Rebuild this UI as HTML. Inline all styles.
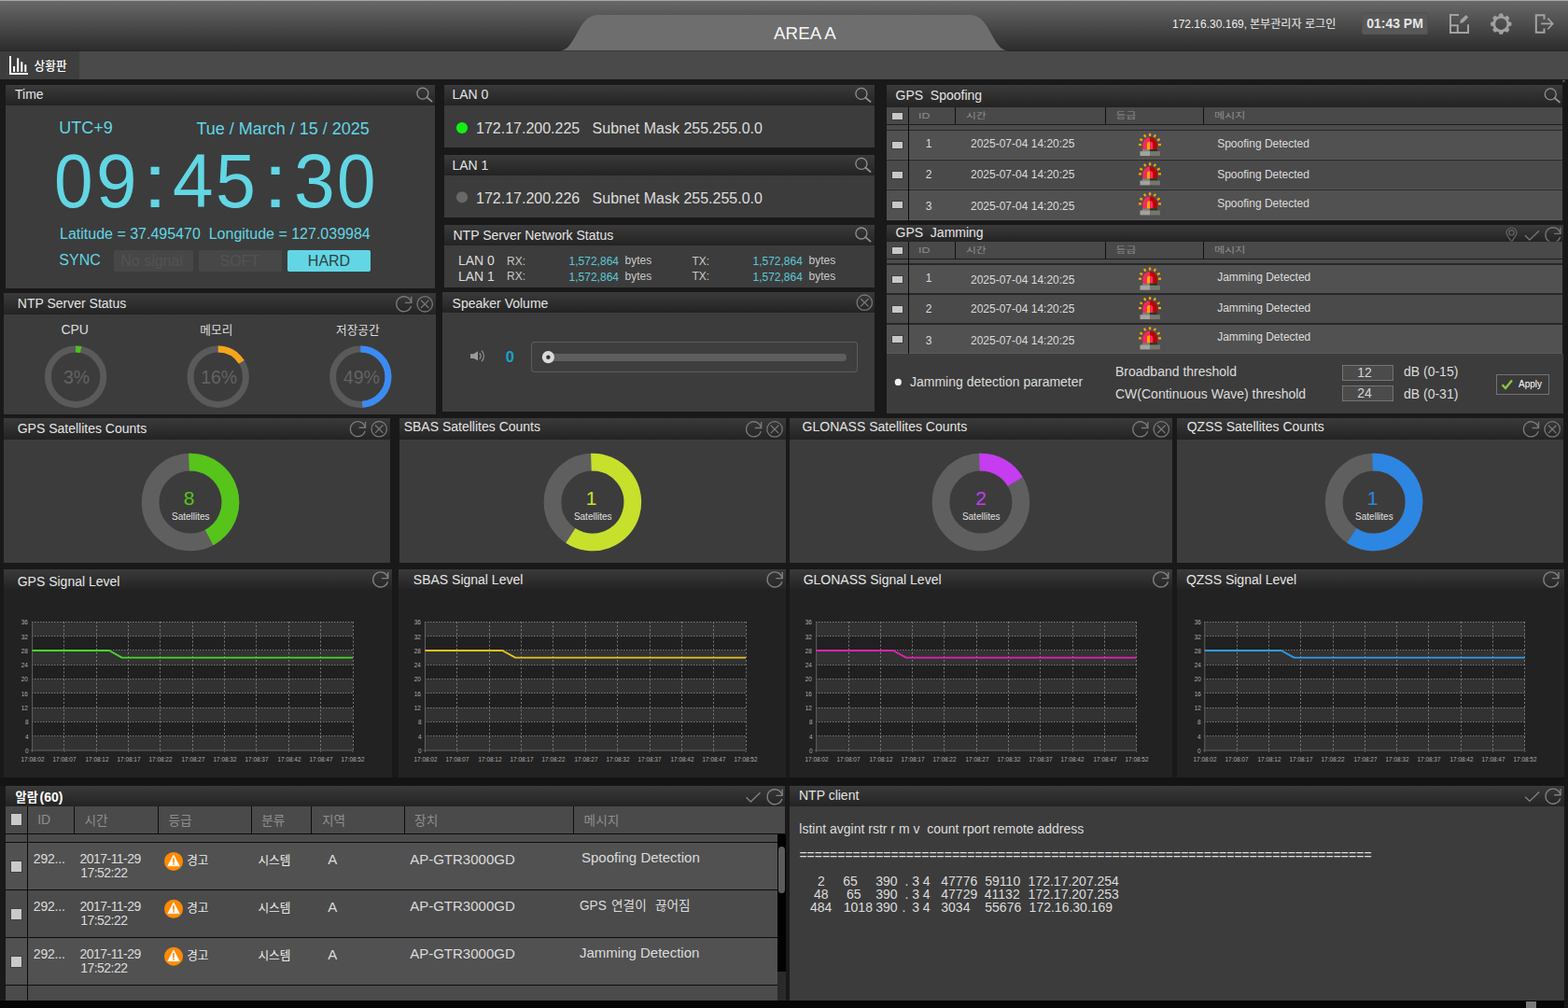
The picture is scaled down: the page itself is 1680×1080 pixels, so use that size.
<!DOCTYPE html>
<html lang="ko"><head><meta charset="utf-8"><title>AREA A</title>
<style>
html,body{margin:0;padding:0}
body{width:1680px;height:1080px;overflow:hidden;position:relative;background:#191919;font-family:"Liberation Sans",sans-serif;color:#ddd}
.a{position:absolute}
.t{position:absolute;white-space:pre;line-height:1}
svg.ov{position:absolute;left:0;top:0}
svg.ov text{font-family:"Liberation Sans","Noto Sans CJK KR",sans-serif;white-space:pre}
</style></head><body>
<div class="a" style="left:0px;top:0px;width:1680px;height:55px;background:linear-gradient(#686868,#2b2b2b);border-top:1px solid #a6a6a6;box-sizing:border-box;"></div>
<div class="a" style="left:0px;top:54px;width:1680px;height:1px;background:#262626;"></div>
<div class="a" style="left:1458.7px;top:13px;width:71.6px;height:24px;background:#585858;border-radius:3px;box-shadow:inset 0 0 0 1px #525252;"></div>
<div class="a" style="left:0px;top:55px;width:1680px;height:30px;background:#4a4a4a;"></div>
<div class="a" style="left:0px;top:55px;width:85px;height:30px;background:#3e3e3e;"></div>
<div class="a" style="left:1675.5px;top:85px;width:4.5px;height:995px;background:#171717;"></div>
<div class="a" style="left:6px;top:91px;width:460px;height:22px;background:linear-gradient(#3a3a3a,#232323);"></div>
<div class="a" style="left:6px;top:113px;width:460px;height:196px;background:#3c3c3c;"></div>
<div class="a" style="left:122.3px;top:268px;width:84.7px;height:23px;background:#474747;border-radius:2px;"></div>
<div class="a" style="left:213px;top:268px;width:89px;height:23px;background:#474747;border-radius:2px;"></div>
<div class="a" style="left:308px;top:268px;width:89px;height:23px;background:#62d6e4;border-radius:2px;"></div>
<div class="a" style="left:476px;top:91px;width:460.5px;height:22px;background:linear-gradient(#3a3a3a,#232323);"></div>
<div class="a" style="left:476px;top:113px;width:460.5px;height:45px;background:#3c3c3c;"></div>
<div class="a" style="left:476px;top:166px;width:460.5px;height:22px;background:linear-gradient(#3a3a3a,#232323);"></div>
<div class="a" style="left:476px;top:188px;width:460.5px;height:45px;background:#3c3c3c;"></div>
<div class="a" style="left:476px;top:241px;width:460.5px;height:22px;background:linear-gradient(#3a3a3a,#232323);"></div>
<div class="a" style="left:476px;top:263px;width:460.5px;height:45px;background:#3c3c3c;"></div>
<div class="a" style="left:950px;top:91px;width:724px;height:24px;background:linear-gradient(#3a3a3a,#232323);"></div>
<div class="a" style="left:950px;top:115px;width:723.5px;height:18.4px;background:#494949;"></div>
<div class="a" style="left:950px;top:133.4px;width:723.5px;height:6px;background:#4b4b4b;"></div>
<div class="a" style="left:950px;top:133.2px;width:723.5px;height:1.1px;background:#1e1e1e;"></div>
<div class="a" style="left:1023px;top:115px;width:1px;height:18.4px;background:#101010;"></div>
<div class="a" style="left:1184px;top:115px;width:1px;height:18.4px;background:#101010;"></div>
<div class="a" style="left:1289px;top:115px;width:1px;height:18.4px;background:#101010;"></div>
<div class="a" style="left:955.8px;top:121px;width:11.6px;height:7px;background:#c8c8c8;box-shadow:0 0 0 1px #3e3e3e;"></div>
<div class="a" style="left:950px;top:138.7px;width:723.5px;height:1.5px;background:#282828;"></div>
<div class="a" style="left:950px;top:140.2px;width:723.5px;height:30.8px;background:#515151;"></div>
<div class="a" style="left:950px;top:170.2px;width:723.5px;height:0.8px;background:#5a5a5a;"></div>
<div class="a" style="left:955.8px;top:152.1px;width:11.6px;height:7px;background:#c8c8c8;box-shadow:0 0 0 1px #3e3e3e;"></div>
<div class="a" style="left:950px;top:170.7px;width:723.5px;height:1.5px;background:#282828;"></div>
<div class="a" style="left:950px;top:172.2px;width:723.5px;height:30.8px;background:#4a4a4a;"></div>
<div class="a" style="left:950px;top:202.2px;width:723.5px;height:0.8px;background:#545454;"></div>
<div class="a" style="left:955.8px;top:184.1px;width:11.6px;height:7px;background:#c8c8c8;box-shadow:0 0 0 1px #3e3e3e;"></div>
<div class="a" style="left:950px;top:202.7px;width:723.5px;height:1.5px;background:#282828;"></div>
<div class="a" style="left:950px;top:204.2px;width:723.5px;height:31.5px;background:#515151;"></div>
<div class="a" style="left:950px;top:234.9px;width:723.5px;height:0.8px;background:#5a5a5a;"></div>
<div class="a" style="left:955.8px;top:216.45px;width:11.6px;height:7px;background:#c8c8c8;box-shadow:0 0 0 1px #3e3e3e;"></div>
<div class="a" style="left:973px;top:115px;width:1px;height:120.7px;background:#0a0a0a;"></div>
<div class="a" style="left:950px;top:240.6px;width:725.2px;height:18px;background:linear-gradient(#3a3a3a,#232323);"></div>
<div class="a" style="left:950px;top:258.6px;width:723.5px;height:18.4px;background:#494949;"></div>
<div class="a" style="left:950px;top:277px;width:723.5px;height:6px;background:#4b4b4b;"></div>
<div class="a" style="left:950px;top:276.8px;width:723.5px;height:1.1px;background:#1e1e1e;"></div>
<div class="a" style="left:1023px;top:258.6px;width:1px;height:18.4px;background:#101010;"></div>
<div class="a" style="left:1184px;top:258.6px;width:1px;height:18.4px;background:#101010;"></div>
<div class="a" style="left:1289px;top:258.6px;width:1px;height:18.4px;background:#101010;"></div>
<div class="a" style="left:955.8px;top:264.6px;width:11.6px;height:7px;background:#c8c8c8;box-shadow:0 0 0 1px #3e3e3e;"></div>
<div class="a" style="left:950px;top:282.4px;width:723.5px;height:1.5px;background:#282828;"></div>
<div class="a" style="left:950px;top:283.9px;width:723.5px;height:30.5px;background:#515151;"></div>
<div class="a" style="left:950px;top:313.6px;width:723.5px;height:0.8px;background:#5a5a5a;"></div>
<div class="a" style="left:955.8px;top:295.65px;width:11.6px;height:7px;background:#c8c8c8;box-shadow:0 0 0 1px #3e3e3e;"></div>
<div class="a" style="left:950px;top:314.3px;width:723.5px;height:1.5px;background:#282828;"></div>
<div class="a" style="left:950px;top:315.8px;width:723.5px;height:30.6px;background:#4a4a4a;"></div>
<div class="a" style="left:950px;top:345.6px;width:723.5px;height:0.8px;background:#545454;"></div>
<div class="a" style="left:955.8px;top:327.6px;width:11.6px;height:7px;background:#c8c8c8;box-shadow:0 0 0 1px #3e3e3e;"></div>
<div class="a" style="left:950px;top:346.3px;width:723.5px;height:1.5px;background:#282828;"></div>
<div class="a" style="left:950px;top:347.8px;width:723.5px;height:30.8px;background:#515151;"></div>
<div class="a" style="left:950px;top:377.8px;width:723.5px;height:0.8px;background:#5a5a5a;"></div>
<div class="a" style="left:955.8px;top:359.7px;width:11.6px;height:7px;background:#c8c8c8;box-shadow:0 0 0 1px #3e3e3e;"></div>
<div class="a" style="left:973px;top:258.6px;width:1px;height:120px;background:#0a0a0a;"></div>
<div class="a" style="left:950px;top:378.6px;width:725.2px;height:64.4px;background:#3c3c3c;"></div>
<div class="a" style="left:1438.3px;top:391px;width:54.7px;height:16.7px;background:#4b4b4b;box-shadow:inset 0 0 0 1px #747474;"></div>
<div class="a" style="left:1438.3px;top:413.3px;width:54.7px;height:16.4px;background:#4b4b4b;box-shadow:inset 0 0 0 1px #747474;"></div>
<div class="a" style="left:1603px;top:401.3px;width:57px;height:21.4px;background:#3a3a3a;box-shadow:inset 0 0 0 1px #727272;"></div>
<div class="a" style="left:4.3px;top:314px;width:462.7px;height:22.5px;background:linear-gradient(#3a3a3a,#232323);"></div>
<div class="a" style="left:4.3px;top:336.5px;width:462.7px;height:107.5px;background:#3c3c3c;"></div>
<div class="a" style="left:473.7px;top:313px;width:463.7px;height:22px;background:linear-gradient(#3a3a3a,#232323);"></div>
<div class="a" style="left:473.7px;top:335px;width:463.7px;height:106.3px;background:#3c3c3c;"></div>
<div class="a" style="left:569.4px;top:366.2px;width:349.4px;height:32.4px;background:#3e3e3e;box-shadow:inset 0 0 0 1px #5c5c5c;border-radius:4px;"></div>
<div class="a" style="left:582.5px;top:378.8px;width:324.5px;height:8.4px;background:#5e5e5e;border-radius:4.2px;"></div>
<div class="a" style="left:3.6px;top:448px;width:414.4px;height:22.6px;background:linear-gradient(#3a3a3a,#232323);"></div>
<div class="a" style="left:3.6px;top:470.6px;width:414.4px;height:132.4px;background:#3c3c3c;"></div>
<div class="a" style="left:427.5px;top:448px;width:414.5px;height:22.6px;background:linear-gradient(#3a3a3a,#232323);"></div>
<div class="a" style="left:427.5px;top:470.6px;width:414.5px;height:132.4px;background:#3c3c3c;"></div>
<div class="a" style="left:846.1px;top:448px;width:409.6px;height:22.6px;background:linear-gradient(#3a3a3a,#232323);"></div>
<div class="a" style="left:846.1px;top:470.6px;width:409.6px;height:132.4px;background:#3c3c3c;"></div>
<div class="a" style="left:1260.5px;top:448px;width:414.3px;height:22.6px;background:linear-gradient(#3a3a3a,#232323);"></div>
<div class="a" style="left:1260.5px;top:470.6px;width:414.3px;height:132.4px;background:#3c3c3c;"></div>
<div class="a" style="left:4.4px;top:609.5px;width:415.4px;height:21.5px;background:linear-gradient(#3a3a3a,#242424);"></div>
<div class="a" style="left:4.4px;top:631px;width:415.4px;height:202.4px;background:#222;"></div>
<div class="a" style="left:427px;top:609.5px;width:414.5px;height:21.5px;background:linear-gradient(#3a3a3a,#242424);"></div>
<div class="a" style="left:427px;top:631px;width:414.5px;height:202.4px;background:#222;"></div>
<div class="a" style="left:845.6px;top:609.5px;width:410.1px;height:21.5px;background:linear-gradient(#3a3a3a,#242424);"></div>
<div class="a" style="left:845.6px;top:631px;width:410.1px;height:202.4px;background:#222;"></div>
<div class="a" style="left:1260.5px;top:609.5px;width:415.5px;height:21.5px;background:linear-gradient(#3a3a3a,#242424);"></div>
<div class="a" style="left:1260.5px;top:631px;width:415.5px;height:202.4px;background:#222;"></div>
<div class="a" style="left:0px;top:833.4px;width:1675.5px;height:8.6px;background:#141414;"></div>
<div class="a" style="left:5.6px;top:842px;width:835.9px;height:21.7px;background:linear-gradient(#3a3a3a,#232323);"></div>
<div class="a" style="left:5.6px;top:863.7px;width:835.9px;height:29.3px;background:#4a4a4a;"></div>
<div class="a" style="left:5.6px;top:893px;width:835.9px;height:1px;background:#0c0c0c;"></div>
<div class="a" style="left:5.6px;top:894px;width:827.4px;height:8px;background:#4b4b4b;"></div>
<div class="a" style="left:833px;top:894px;width:8.5px;height:146.6px;background:#020202;"></div>
<div class="a" style="left:833px;top:1040.6px;width:8.5px;height:31.4px;background:#2a2a2a;"></div>
<div class="a" style="left:833.6px;top:906.8px;width:7px;height:49.8px;background:#5c5c5c;border-radius:3.5px;"></div>
<div class="a" style="left:79px;top:863.7px;width:1px;height:29.3px;background:#0c0c0c;"></div>
<div class="a" style="left:169px;top:863.7px;width:1px;height:29.3px;background:#0c0c0c;"></div>
<div class="a" style="left:269px;top:863.7px;width:1px;height:29.3px;background:#0c0c0c;"></div>
<div class="a" style="left:333px;top:863.7px;width:1px;height:29.3px;background:#0c0c0c;"></div>
<div class="a" style="left:433px;top:863.7px;width:1px;height:29.3px;background:#0c0c0c;"></div>
<div class="a" style="left:614px;top:863.7px;width:1px;height:29.3px;background:#0c0c0c;"></div>
<div class="a" style="left:11.8px;top:872.2px;width:11.7px;height:12px;background:#cacaca;box-shadow:0 0 0 1px #424242;"></div>
<div class="a" style="left:5.6px;top:902px;width:827.4px;height:1px;background:#0c0c0c;"></div>
<div class="a" style="left:5.6px;top:903px;width:827.4px;height:50px;background:#515151;"></div>
<div class="a" style="left:11.8px;top:922.7px;width:11.7px;height:11.6px;background:#cacaca;box-shadow:0 0 0 1px #424242;"></div>
<div class="a" style="left:5.6px;top:953px;width:827.4px;height:1px;background:#0c0c0c;"></div>
<div class="a" style="left:5.6px;top:954px;width:827.4px;height:50px;background:#4b4b4b;"></div>
<div class="a" style="left:11.8px;top:973.65px;width:11.7px;height:11.6px;background:#cacaca;box-shadow:0 0 0 1px #424242;"></div>
<div class="a" style="left:5.6px;top:1004px;width:827.4px;height:1px;background:#0c0c0c;"></div>
<div class="a" style="left:5.6px;top:1005px;width:827.4px;height:50px;background:#515151;"></div>
<div class="a" style="left:11.8px;top:1024.6px;width:11.7px;height:11.6px;background:#cacaca;box-shadow:0 0 0 1px #424242;"></div>
<div class="a" style="left:5.6px;top:1055px;width:827.4px;height:1px;background:#0c0c0c;"></div>
<div class="a" style="left:5.6px;top:1056px;width:827.4px;height:16px;background:#4b4b4b;"></div>
<div class="a" style="left:29px;top:863.7px;width:1px;height:208.3px;background:#0a0a0a;"></div>
<div class="a" style="left:0px;top:1072px;width:1675.5px;height:8px;background:#060606;"></div>
<div class="a" style="left:1635px;top:1073px;width:10.7px;height:7px;background:#7a7a7a;"></div>
<div class="a" style="left:846.1px;top:842px;width:829.7px;height:21.7px;background:linear-gradient(#3a3a3a,#232323);"></div>
<div class="a" style="left:846.1px;top:863.7px;width:829.7px;height:208.8px;background:#3c3c3c;"></div>
<svg class="ov" width="1680" height="1080" viewBox="0 0 1680 1080">
<path d="M600 54.2C617 54.2 619 16 640 16H1040C1061 16 1063 54.2 1080 54.2Z" fill="#6e6e6e"/>
<text x="1338.9" y="30" font-size="12.11" fill="#ececec">본부관리자 로그인</text>
<g fill="none" stroke="#a2a2a2" stroke-width="2"><path d="M1563 16H1554V35H1573V26.3"/><path d="M1554 27.3H1561.8V35"/></g><path d="M1564.2 24.9L1564.9 21.6L1570.7 15.9L1573.2 18.4L1567.5 24.2Z" fill="#a2a2a2"/>
<g fill="#a2a2a2" stroke="#a2a2a2" stroke-width="0.5" stroke-linejoin="round"><path d="M1605.8 17.5L1606.8 14.8H1609.8L1610.8 17.5Z" transform="rotate(0 1608.3 25.7)"/><path d="M1605.8 17.5L1606.8 14.8H1609.8L1610.8 17.5Z" transform="rotate(45 1608.3 25.7)"/><path d="M1605.8 17.5L1606.8 14.8H1609.8L1610.8 17.5Z" transform="rotate(90 1608.3 25.7)"/><path d="M1605.8 17.5L1606.8 14.8H1609.8L1610.8 17.5Z" transform="rotate(135 1608.3 25.7)"/><path d="M1605.8 17.5L1606.8 14.8H1609.8L1610.8 17.5Z" transform="rotate(180 1608.3 25.7)"/><path d="M1605.8 17.5L1606.8 14.8H1609.8L1610.8 17.5Z" transform="rotate(225 1608.3 25.7)"/><path d="M1605.8 17.5L1606.8 14.8H1609.8L1610.8 17.5Z" transform="rotate(270 1608.3 25.7)"/><path d="M1605.8 17.5L1606.8 14.8H1609.8L1610.8 17.5Z" transform="rotate(315 1608.3 25.7)"/></g><circle cx="1608.3" cy="25.7" r="7.5" fill="none" stroke="#a2a2a2" stroke-width="2.5"/>
<g fill="none" stroke="#a2a2a2"><path d="M1654.5 20.8V16.2H1645.8V34.8H1654.5V30.4" stroke-width="2"/><path d="M1651.2 25.4H1663.4M1658.3 19.6L1663.8 25.4L1658.3 31.2" stroke-width="1.6"/></g>
<path d="M11 60V79H30" fill="none" stroke="#fff" stroke-width="2"/><path d="M15.1 71V77M19.2 62.2V77M23.3 66.2V77M27.3 69.2V77" stroke="#fff" stroke-width="2" fill="none"/>
<text x="36.6" y="75.2" font-size="12.7" font-weight="500" fill="#fff">상황판</text>
<path d="M1673.5 87.5L1675.5 85.3L1677.5 87.5Z" fill="#666"/>
<g fill="none" stroke="#909090" stroke-linecap="round"><circle cx="452.9" cy="100.1" r="6" stroke-width="1.3"/><path d="M457.2 104.2L462.6 108.7" stroke-width="1.7"/></g>
<g fill="none" stroke="#909090" stroke-linecap="round"><circle cx="922.9" cy="100.4" r="6" stroke-width="1.3"/><path d="M927.2 104.5L932.6 109" stroke-width="1.7"/></g>
<circle cx="495" cy="137" r="6.1" fill="#12f012"/>
<g fill="none" stroke="#909090" stroke-linecap="round"><circle cx="922.9" cy="175.4" r="6" stroke-width="1.3"/><path d="M927.2 179.5L932.6 184" stroke-width="1.7"/></g>
<circle cx="495" cy="211.3" r="6.1" fill="#686868"/>
<g fill="none" stroke="#909090" stroke-linecap="round"><circle cx="922.9" cy="250" r="6" stroke-width="1.3"/><path d="M927.2 254.1L932.6 258.6" stroke-width="1.7"/></g>
<g fill="none" stroke="#909090" stroke-linecap="round"><circle cx="1661.3" cy="100.9" r="6" stroke-width="1.3"/><path d="M1665.6 105L1671 109.5" stroke-width="1.7"/></g>
<text transform="translate(1034.9 127.4) scale(1.35 1)" font-size="8.79" fill="#8e8e8e">시간</text>
<text transform="translate(1195.6 127.4) scale(1.35 1)" font-size="8.79" fill="#8e8e8e">등급</text>
<text transform="translate(1300.9 127.4) scale(1.38 1)" font-size="8.79" fill="#8e8e8e">메시지</text>
<g transform="translate(1210 138)"><g fill="#ffa500"><rect x="20.9" y="4.9" width="2.3" height="3"/><rect x="-1.1" y="-1.5" width="2.2" height="3" transform="translate(16.7 7.6) rotate(-32)"/><rect x="-1.1" y="-1.5" width="2.2" height="3" transform="translate(27.3 7.6) rotate(32)"/><rect x="-1.1" y="-1.5" width="2.2" height="3" transform="translate(12.7 11.8) rotate(-60)"/><rect x="-1.1" y="-1.5" width="2.2" height="3" transform="translate(31.3 11.8) rotate(60)"/><rect x="10" y="15.9" width="3" height="2.2"/><rect x="31" y="15.9" width="3" height="2.2"/></g><path d="M14.3 22V17A7.75 7.75 0 0 1 22.05 9.2V22Z" fill="#f2295c"/><path d="M29.8 22V17A7.75 7.75 0 0 0 22.05 9.2V22Z" fill="#c00000"/><path d="M18.9 22V17A3.15 3.15 0 0 1 22.05 13.85V22Z" fill="#ffa500"/><path d="M25.2 22V17A3.15 3.15 0 0 0 22.05 13.85V22Z" fill="#f2305f"/><rect x="14" y="22" width="8.05" height="2.2" fill="#7c827a"/><rect x="22.05" y="22" width="7.9" height="2.2" fill="#1f3d20"/><rect x="11.5" y="24.1" width="10.55" height="4.9" fill="#a3a39d"/><rect x="22.05" y="24.1" width="10.85" height="4.9" fill="#76786f"/></g>
<g transform="translate(1210 169.4)"><g fill="#ffa500"><rect x="20.9" y="4.9" width="2.3" height="3"/><rect x="-1.1" y="-1.5" width="2.2" height="3" transform="translate(16.7 7.6) rotate(-32)"/><rect x="-1.1" y="-1.5" width="2.2" height="3" transform="translate(27.3 7.6) rotate(32)"/><rect x="-1.1" y="-1.5" width="2.2" height="3" transform="translate(12.7 11.8) rotate(-60)"/><rect x="-1.1" y="-1.5" width="2.2" height="3" transform="translate(31.3 11.8) rotate(60)"/><rect x="10" y="15.9" width="3" height="2.2"/><rect x="31" y="15.9" width="3" height="2.2"/></g><path d="M14.3 22V17A7.75 7.75 0 0 1 22.05 9.2V22Z" fill="#f2295c"/><path d="M29.8 22V17A7.75 7.75 0 0 0 22.05 9.2V22Z" fill="#c00000"/><path d="M18.9 22V17A3.15 3.15 0 0 1 22.05 13.85V22Z" fill="#ffa500"/><path d="M25.2 22V17A3.15 3.15 0 0 0 22.05 13.85V22Z" fill="#f2305f"/><rect x="14" y="22" width="8.05" height="2.2" fill="#7c827a"/><rect x="22.05" y="22" width="7.9" height="2.2" fill="#1f3d20"/><rect x="11.5" y="24.1" width="10.55" height="4.9" fill="#a3a39d"/><rect x="22.05" y="24.1" width="10.85" height="4.9" fill="#76786f"/></g>
<g transform="translate(1210 201.4)"><g fill="#ffa500"><rect x="20.9" y="4.9" width="2.3" height="3"/><rect x="-1.1" y="-1.5" width="2.2" height="3" transform="translate(16.7 7.6) rotate(-32)"/><rect x="-1.1" y="-1.5" width="2.2" height="3" transform="translate(27.3 7.6) rotate(32)"/><rect x="-1.1" y="-1.5" width="2.2" height="3" transform="translate(12.7 11.8) rotate(-60)"/><rect x="-1.1" y="-1.5" width="2.2" height="3" transform="translate(31.3 11.8) rotate(60)"/><rect x="10" y="15.9" width="3" height="2.2"/><rect x="31" y="15.9" width="3" height="2.2"/></g><path d="M14.3 22V17A7.75 7.75 0 0 1 22.05 9.2V22Z" fill="#f2295c"/><path d="M29.8 22V17A7.75 7.75 0 0 0 22.05 9.2V22Z" fill="#c00000"/><path d="M18.9 22V17A3.15 3.15 0 0 1 22.05 13.85V22Z" fill="#ffa500"/><path d="M25.2 22V17A3.15 3.15 0 0 0 22.05 13.85V22Z" fill="#f2305f"/><rect x="14" y="22" width="8.05" height="2.2" fill="#7c827a"/><rect x="22.05" y="22" width="7.9" height="2.2" fill="#1f3d20"/><rect x="11.5" y="24.1" width="10.55" height="4.9" fill="#a3a39d"/><rect x="22.05" y="24.1" width="10.85" height="4.9" fill="#76786f"/></g>
<clipPath id="cj"><rect x="1600" y="240.6" width="80" height="17.8"/></clipPath>
<g fill="none" stroke="#646464" stroke-width="1.2" clip-path="url(#cj)"><path d="M1619.5 259.5C1617.5 255 1614 252.5 1614 249.5A5.5 5.5 0 0 1 1625 249.5C1625 252.5 1621.5 255 1619.5 259.5Z"/><circle cx="1619.5" cy="249.3" r="2.7"/></g>
<path fill="none" stroke="#747474" stroke-width="1.4" clip-path="url(#cj)" d="M1634 252.3L1638.9 257L1649 247.2"/>
<g fill="none" stroke="#747474" stroke-width="1.4" clip-path="url(#cj)"><path d="M1671.8 250.4A8 8 0 1 0 1671.6 254"/><path d="M1672 243.8V250.4H1665.1"/></g>
<text transform="translate(1034.9 271) scale(1.35 1)" font-size="8.79" fill="#8e8e8e">시간</text>
<text transform="translate(1195.6 271) scale(1.35 1)" font-size="8.79" fill="#8e8e8e">등급</text>
<text transform="translate(1300.9 271) scale(1.38 1)" font-size="8.79" fill="#8e8e8e">메시지</text>
<g transform="translate(1210 281.7)"><g fill="#ffa500"><rect x="20.9" y="4.9" width="2.3" height="3"/><rect x="-1.1" y="-1.5" width="2.2" height="3" transform="translate(16.7 7.6) rotate(-32)"/><rect x="-1.1" y="-1.5" width="2.2" height="3" transform="translate(27.3 7.6) rotate(32)"/><rect x="-1.1" y="-1.5" width="2.2" height="3" transform="translate(12.7 11.8) rotate(-60)"/><rect x="-1.1" y="-1.5" width="2.2" height="3" transform="translate(31.3 11.8) rotate(60)"/><rect x="10" y="15.9" width="3" height="2.2"/><rect x="31" y="15.9" width="3" height="2.2"/></g><path d="M14.3 22V17A7.75 7.75 0 0 1 22.05 9.2V22Z" fill="#f2295c"/><path d="M29.8 22V17A7.75 7.75 0 0 0 22.05 9.2V22Z" fill="#c00000"/><path d="M18.9 22V17A3.15 3.15 0 0 1 22.05 13.85V22Z" fill="#ffa500"/><path d="M25.2 22V17A3.15 3.15 0 0 0 22.05 13.85V22Z" fill="#f2305f"/><rect x="14" y="22" width="8.05" height="2.2" fill="#7c827a"/><rect x="22.05" y="22" width="7.9" height="2.2" fill="#1f3d20"/><rect x="11.5" y="24.1" width="10.55" height="4.9" fill="#a3a39d"/><rect x="22.05" y="24.1" width="10.85" height="4.9" fill="#76786f"/></g>
<g transform="translate(1210 313.1)"><g fill="#ffa500"><rect x="20.9" y="4.9" width="2.3" height="3"/><rect x="-1.1" y="-1.5" width="2.2" height="3" transform="translate(16.7 7.6) rotate(-32)"/><rect x="-1.1" y="-1.5" width="2.2" height="3" transform="translate(27.3 7.6) rotate(32)"/><rect x="-1.1" y="-1.5" width="2.2" height="3" transform="translate(12.7 11.8) rotate(-60)"/><rect x="-1.1" y="-1.5" width="2.2" height="3" transform="translate(31.3 11.8) rotate(60)"/><rect x="10" y="15.9" width="3" height="2.2"/><rect x="31" y="15.9" width="3" height="2.2"/></g><path d="M14.3 22V17A7.75 7.75 0 0 1 22.05 9.2V22Z" fill="#f2295c"/><path d="M29.8 22V17A7.75 7.75 0 0 0 22.05 9.2V22Z" fill="#c00000"/><path d="M18.9 22V17A3.15 3.15 0 0 1 22.05 13.85V22Z" fill="#ffa500"/><path d="M25.2 22V17A3.15 3.15 0 0 0 22.05 13.85V22Z" fill="#f2305f"/><rect x="14" y="22" width="8.05" height="2.2" fill="#7c827a"/><rect x="22.05" y="22" width="7.9" height="2.2" fill="#1f3d20"/><rect x="11.5" y="24.1" width="10.55" height="4.9" fill="#a3a39d"/><rect x="22.05" y="24.1" width="10.85" height="4.9" fill="#76786f"/></g>
<g transform="translate(1210 345.4)"><g fill="#ffa500"><rect x="20.9" y="4.9" width="2.3" height="3"/><rect x="-1.1" y="-1.5" width="2.2" height="3" transform="translate(16.7 7.6) rotate(-32)"/><rect x="-1.1" y="-1.5" width="2.2" height="3" transform="translate(27.3 7.6) rotate(32)"/><rect x="-1.1" y="-1.5" width="2.2" height="3" transform="translate(12.7 11.8) rotate(-60)"/><rect x="-1.1" y="-1.5" width="2.2" height="3" transform="translate(31.3 11.8) rotate(60)"/><rect x="10" y="15.9" width="3" height="2.2"/><rect x="31" y="15.9" width="3" height="2.2"/></g><path d="M14.3 22V17A7.75 7.75 0 0 1 22.05 9.2V22Z" fill="#f2295c"/><path d="M29.8 22V17A7.75 7.75 0 0 0 22.05 9.2V22Z" fill="#c00000"/><path d="M18.9 22V17A3.15 3.15 0 0 1 22.05 13.85V22Z" fill="#ffa500"/><path d="M25.2 22V17A3.15 3.15 0 0 0 22.05 13.85V22Z" fill="#f2305f"/><rect x="14" y="22" width="8.05" height="2.2" fill="#7c827a"/><rect x="22.05" y="22" width="7.9" height="2.2" fill="#1f3d20"/><rect x="11.5" y="24.1" width="10.55" height="4.9" fill="#a3a39d"/><rect x="22.05" y="24.1" width="10.85" height="4.9" fill="#76786f"/></g>
<circle cx="962.3" cy="409.4" r="3.6" fill="#f0f0f0"/>
<path d="M1609.6 412.2L1613 416L1620 407.6" fill="none" stroke="#8cc63f" stroke-width="2.4"/>
<g fill="none" stroke="#787878" stroke-width="1.4"><path d="M440.6 324.4A8 8 0 1 0 440.4 328"/><path d="M440.8 317.8V324.4H433.9"/></g>
<g fill="none" stroke="#787878" stroke-width="1.3"><circle cx="455.2" cy="325.8" r="8.2"/><path d="M451 321.6L459.4 330M459.4 321.6L451 330"/></g>
<text x="214.3" y="357.6" font-size="12.7" fill="#dcdcdc">메모리</text>
<text x="360" y="357.6" font-size="12.7" fill="#dcdcdc">저장공간</text>
<circle cx="81.1" cy="403.7" r="29.7" fill="none" stroke="#5a5a5a" stroke-width="7"/><path d="M81.1 374A29.7 29.7 0 0 1 86.67 374.53" fill="none" stroke="#4bc41e" stroke-width="7"/>
<circle cx="233.7" cy="403.7" r="29.7" fill="none" stroke="#5a5a5a" stroke-width="7"/><path d="M233.7 374A29.7 29.7 0 0 1 258.78 387.79" fill="none" stroke="#f5a51c" stroke-width="7"/>
<circle cx="386.3" cy="403.7" r="29.7" fill="none" stroke="#5a5a5a" stroke-width="7"/><path d="M386.3 374A29.7 29.7 0 0 1 388.16 433.34" fill="none" stroke="#3a8cf2" stroke-width="7"/>
<g fill="none" stroke="#787878" stroke-width="1.3"><circle cx="926.3" cy="324.2" r="8.2"/><path d="M922.1 320L930.5 328.4M930.5 320L922.1 328.4"/></g>
<g fill="#9a9a9a"><path d="M504 379.3H507.5L512 376.2V386.3L507.5 384H504Z"/></g><g fill="none" stroke="#9a9a9a" stroke-width="1.1"><path d="M513.8 378.3A5 5 0 0 1 513.8 384.7"/><path d="M516 375.6A8.5 8.5 0 0 1 516 387.4"/></g>
<circle cx="587.4" cy="382.7" r="6.6" fill="#dadada"/><circle cx="587.4" cy="382.7" r="2.2" fill="#333"/>
<g fill="none" stroke="#787878" stroke-width="1.4"><path d="M391.3 458.3A8 8 0 1 0 391.1 461.9"/><path d="M391.5 451.7V458.3H384.6"/></g>
<g fill="none" stroke="#787878" stroke-width="1.3"><circle cx="406.2" cy="459.7" r="8.2"/><path d="M402 455.5L410.4 463.9M410.4 455.5L402 463.9"/></g>
<circle cx="204" cy="538" r="42.9" fill="none" stroke="#5f5f5f" stroke-width="18.7"/><path d="M202.5 495.13A42.9 42.9 0 0 1 224.14 575.88" fill="none" stroke="#56c41a" stroke-width="18.7"/>
<g fill="none" stroke="#787878" stroke-width="1.4"><path d="M815.5 458.5A8 8 0 1 0 815.3 462.1"/><path d="M815.7 451.9V458.5H808.8"/></g>
<g fill="none" stroke="#787878" stroke-width="1.3"><circle cx="830" cy="459.9" r="8.2"/><path d="M825.8 455.7L834.2 464.1M834.2 455.7L825.8 464.1"/></g>
<circle cx="634.9" cy="538" r="42.9" fill="none" stroke="#5f5f5f" stroke-width="18.7"/><path d="M633.4 495.13A42.9 42.9 0 1 1 611.35 573.86" fill="none" stroke="#c6e02c" stroke-width="18.7"/>
<g fill="none" stroke="#787878" stroke-width="1.4"><path d="M1229.7 458.5A8 8 0 1 0 1229.5 462.1"/><path d="M1229.9 451.9V458.5H1223"/></g>
<g fill="none" stroke="#787878" stroke-width="1.3"><circle cx="1244.3" cy="459.9" r="8.2"/><path d="M1240.1 455.7L1248.5 464.1M1248.5 455.7L1240.1 464.1"/></g>
<circle cx="1050.9" cy="538" r="42.9" fill="none" stroke="#5f5f5f" stroke-width="18.7"/><path d="M1049.4 495.13A42.9 42.9 0 0 1 1087.75 516.03" fill="none" stroke="#c63cf0" stroke-width="18.7"/>
<g fill="none" stroke="#787878" stroke-width="1.4"><path d="M1648.3 458.5A8 8 0 1 0 1648.1 462.1"/><path d="M1648.5 451.9V458.5H1641.6"/></g>
<g fill="none" stroke="#787878" stroke-width="1.3"><circle cx="1663.2" cy="459.9" r="8.2"/><path d="M1659 455.7L1667.4 464.1M1667.4 455.7L1659 464.1"/></g>
<circle cx="1472.1" cy="538" r="42.9" fill="none" stroke="#5f5f5f" stroke-width="18.7"/><path d="M1470.6 495.13A42.9 42.9 0 1 1 1448.3 573.69" fill="none" stroke="#2c86e2" stroke-width="18.7"/>
<g fill="none" stroke="#808080" stroke-width="1.4"><path d="M415.6 619.6A8 8 0 1 0 415.4 623.2"/><path d="M415.8 613V619.6H408.9"/></g>
<rect x="34.6" y="666.4" width="343.4" height="15.29" fill="#323232"/><rect x="34.6" y="681.69" width="343.4" height="15.29" fill="#202020"/><rect x="34.6" y="696.98" width="343.4" height="15.29" fill="#323232"/><rect x="34.6" y="712.27" width="343.4" height="15.29" fill="#202020"/><rect x="34.6" y="727.56" width="343.4" height="15.29" fill="#323232"/><rect x="34.6" y="742.84" width="343.4" height="15.29" fill="#202020"/><rect x="34.6" y="758.13" width="343.4" height="15.29" fill="#323232"/><rect x="34.6" y="773.42" width="343.4" height="15.29" fill="#202020"/><rect x="34.6" y="788.71" width="343.4" height="15.29" fill="#323232"/><path d="M34 666.5H378M34 681.5H378M34 696.5H378M34 712.5H378M34 727.5H378M34 742.5H378M34 758.5H378M34 773.5H378M34 788.5H378" stroke="#787878" stroke-width="1" stroke-dasharray="1.5 1.5" fill="none"/><path d="M68.5 666V804M103.5 666V804M137.5 666V804M171.5 666V804M206.5 666V804M240.5 666V804M274.5 666V804M309.5 666V804M343.5 666V804M378.5 666V804" stroke="#7a7a7a" stroke-width="1" stroke-dasharray="2 2.1" fill="none"/><path d="M34.6 666.4V806M32.6 804H378M68.94 804V806M103.28 804V806M137.62 804V806M171.96 804V806M206.3 804V806M240.64 804V806M274.98 804V806M309.32 804V806M343.66 804V806M378 804V806" stroke="#626262" stroke-width="1" fill="none"/><path d="M34.6 696.98H117L130.6 704.62H378" stroke="#48d828" stroke-width="1.8" fill="none" stroke-linejoin="round"/>
<g fill="none" stroke="#808080" stroke-width="1.4"><path d="M838 619.6A8 8 0 1 0 837.8 623.2"/><path d="M838.2 613V619.6H831.3"/></g>
<rect x="455.5" y="666.4" width="343.6" height="15.29" fill="#323232"/><rect x="455.5" y="681.69" width="343.6" height="15.29" fill="#202020"/><rect x="455.5" y="696.98" width="343.6" height="15.29" fill="#323232"/><rect x="455.5" y="712.27" width="343.6" height="15.29" fill="#202020"/><rect x="455.5" y="727.56" width="343.6" height="15.29" fill="#323232"/><rect x="455.5" y="742.84" width="343.6" height="15.29" fill="#202020"/><rect x="455.5" y="758.13" width="343.6" height="15.29" fill="#323232"/><rect x="455.5" y="773.42" width="343.6" height="15.29" fill="#202020"/><rect x="455.5" y="788.71" width="343.6" height="15.29" fill="#323232"/><path d="M455 666.5H799.1M455 681.5H799.1M455 696.5H799.1M455 712.5H799.1M455 727.5H799.1M455 742.5H799.1M455 758.5H799.1M455 773.5H799.1M455 788.5H799.1" stroke="#787878" stroke-width="1" stroke-dasharray="1.5 1.5" fill="none"/><path d="M489.5 666V804M524.5 666V804M558.5 666V804M592.5 666V804M627.5 666V804M661.5 666V804M696.5 666V804M730.5 666V804M764.5 666V804M799.5 666V804" stroke="#7a7a7a" stroke-width="1" stroke-dasharray="2 2.1" fill="none"/><path d="M455.5 666.4V806M453.5 804H799.1M489.86 804V806M524.22 804V806M558.58 804V806M592.94 804V806M627.3 804V806M661.66 804V806M696.02 804V806M730.38 804V806M764.74 804V806M799.1 804V806" stroke="#626262" stroke-width="1" fill="none"/><path d="M455.5 696.98H538.2L552.2 704.62H799.1" stroke="#e6c222" stroke-width="1.8" fill="none" stroke-linejoin="round"/>
<g fill="none" stroke="#808080" stroke-width="1.4"><path d="M1251.6 619.6A8 8 0 1 0 1251.4 623.2"/><path d="M1251.8 613V619.6H1244.9"/></g>
<rect x="874.7" y="666.4" width="343.1" height="15.29" fill="#323232"/><rect x="874.7" y="681.69" width="343.1" height="15.29" fill="#202020"/><rect x="874.7" y="696.98" width="343.1" height="15.29" fill="#323232"/><rect x="874.7" y="712.27" width="343.1" height="15.29" fill="#202020"/><rect x="874.7" y="727.56" width="343.1" height="15.29" fill="#323232"/><rect x="874.7" y="742.84" width="343.1" height="15.29" fill="#202020"/><rect x="874.7" y="758.13" width="343.1" height="15.29" fill="#323232"/><rect x="874.7" y="773.42" width="343.1" height="15.29" fill="#202020"/><rect x="874.7" y="788.71" width="343.1" height="15.29" fill="#323232"/><path d="M874 666.5H1217.8M874 681.5H1217.8M874 696.5H1217.8M874 712.5H1217.8M874 727.5H1217.8M874 742.5H1217.8M874 758.5H1217.8M874 773.5H1217.8M874 788.5H1217.8" stroke="#787878" stroke-width="1" stroke-dasharray="1.5 1.5" fill="none"/><path d="M909.5 666V804M943.5 666V804M977.5 666V804M1011.5 666V804M1046.5 666V804M1080.5 666V804M1114.5 666V804M1149.5 666V804M1183.5 666V804M1217.5 666V804" stroke="#7a7a7a" stroke-width="1" stroke-dasharray="2 2.1" fill="none"/><path d="M874.7 666.4V806M872.7 804H1217.8M909.01 804V806M943.32 804V806M977.63 804V806M1011.94 804V806M1046.25 804V806M1080.56 804V806M1114.87 804V806M1149.18 804V806M1183.49 804V806M1217.8 804V806" stroke="#626262" stroke-width="1" fill="none"/><path d="M874.7 696.98H956.9L970.9 704.62H1217.8" stroke="#e222b4" stroke-width="1.8" fill="none" stroke-linejoin="round"/>
<g fill="none" stroke="#808080" stroke-width="1.4"><path d="M1669.8 619.6A8 8 0 1 0 1669.6 623.2"/><path d="M1670 613V619.6H1663.1"/></g>
<rect x="1290.8" y="666.4" width="343.1" height="15.29" fill="#323232"/><rect x="1290.8" y="681.69" width="343.1" height="15.29" fill="#202020"/><rect x="1290.8" y="696.98" width="343.1" height="15.29" fill="#323232"/><rect x="1290.8" y="712.27" width="343.1" height="15.29" fill="#202020"/><rect x="1290.8" y="727.56" width="343.1" height="15.29" fill="#323232"/><rect x="1290.8" y="742.84" width="343.1" height="15.29" fill="#202020"/><rect x="1290.8" y="758.13" width="343.1" height="15.29" fill="#323232"/><rect x="1290.8" y="773.42" width="343.1" height="15.29" fill="#202020"/><rect x="1290.8" y="788.71" width="343.1" height="15.29" fill="#323232"/><path d="M1290 666.5H1633.9M1290 681.5H1633.9M1290 696.5H1633.9M1290 712.5H1633.9M1290 727.5H1633.9M1290 742.5H1633.9M1290 758.5H1633.9M1290 773.5H1633.9M1290 788.5H1633.9" stroke="#787878" stroke-width="1" stroke-dasharray="1.5 1.5" fill="none"/><path d="M1325.5 666V804M1359.5 666V804M1393.5 666V804M1428.5 666V804M1462.5 666V804M1496.5 666V804M1530.5 666V804M1565.5 666V804M1599.5 666V804M1633.5 666V804" stroke="#7a7a7a" stroke-width="1" stroke-dasharray="2 2.1" fill="none"/><path d="M1290.8 666.4V806M1288.8 804H1633.9M1325.11 804V806M1359.42 804V806M1393.73 804V806M1428.04 804V806M1462.35 804V806M1496.66 804V806M1530.97 804V806M1565.28 804V806M1599.59 804V806M1633.9 804V806" stroke="#626262" stroke-width="1" fill="none"/><path d="M1290.8 696.98H1372.7L1386.6 704.62H1633.9" stroke="#2f9cea" stroke-width="1.8" fill="none" stroke-linejoin="round"/>
<text x="16.6" y="858.6" font-size="13.09" font-weight="bold" fill="#fff">알람</text>
<path fill="none" stroke="#808080" stroke-width="1.4" d="M799.5 854.3L804.4 859L814.5 849.2"/>
<g fill="none" stroke="#808080" stroke-width="1.4"><path d="M838 852.4A8 8 0 1 0 837.8 856"/><path d="M838.2 845.8V852.4H831.3"/></g>
<text x="90.4" y="884" font-size="13.67" fill="#8e8e8e">시간</text>
<text x="180.4" y="884" font-size="13.67" fill="#8e8e8e">등급</text>
<text x="280.3" y="884" font-size="13.67" fill="#8e8e8e">분류</text>
<text x="345" y="884" font-size="13.67" fill="#8e8e8e">지역</text>
<text x="444.1" y="884" font-size="13.67" fill="#8e8e8e">장치</text>
<text x="625.6" y="884" font-size="13.67" fill="#8e8e8e">메시지</text>
<g><circle cx="186" cy="922.9" r="10" fill="#ff8a05"/><path d="M186 915.9L192.2 927.8H179.8Z" fill="#fff" stroke="#fff" stroke-width="0.6" stroke-linejoin="round"/><rect x="185.15" y="919.3" width="1.7" height="5.3" fill="#ff8a05"/><rect x="185.15" y="925.3" width="1.7" height="1.3" fill="#ff8a05"/></g>
<text x="200.2" y="925.9" font-size="12.7" fill="#ececec">경고</text>
<text x="276.4" y="925.9" font-size="12.7" fill="#ececec">시스템</text>
<g><circle cx="186" cy="973.85" r="10" fill="#ff8a05"/><path d="M186 966.85L192.2 978.75H179.8Z" fill="#fff" stroke="#fff" stroke-width="0.6" stroke-linejoin="round"/><rect x="185.15" y="970.25" width="1.7" height="5.3" fill="#ff8a05"/><rect x="185.15" y="976.25" width="1.7" height="1.3" fill="#ff8a05"/></g>
<text x="200.2" y="976.85" font-size="12.7" fill="#ececec">경고</text>
<text x="276.4" y="976.85" font-size="12.7" fill="#ececec">시스템</text>
<text x="655" y="975.25" font-size="13.67" fill="#dcdcdc">연결이</text>
<text x="701.9" y="975.25" font-size="13.67" fill="#dcdcdc">끊어짐</text>
<g><circle cx="186" cy="1024.8" r="10" fill="#ff8a05"/><path d="M186 1017.8L192.2 1029.7H179.8Z" fill="#fff" stroke="#fff" stroke-width="0.6" stroke-linejoin="round"/><rect x="185.15" y="1021.2" width="1.7" height="5.3" fill="#ff8a05"/><rect x="185.15" y="1027.2" width="1.7" height="1.3" fill="#ff8a05"/></g>
<text x="200.2" y="1027.8" font-size="12.7" fill="#ececec">경고</text>
<text x="276.4" y="1027.8" font-size="12.7" fill="#ececec">시스템</text>
<path fill="none" stroke="#808080" stroke-width="1.4" d="M1634.1 853.7L1639 858.4L1649.1 848.6"/>
<g fill="none" stroke="#808080" stroke-width="1.4"><path d="M1671.9 851.8A8 8 0 1 0 1671.7 855.4"/><path d="M1672.1 845.2V851.8H1665.2"/></g>
</svg>
<div class="t" style="top:27px;font-size:18.8px;color:#f6f6f6;left:712.5px;width:300px;text-align:center;">AREA A</div>
<div class="t" style="top:20px;font-size:12px;color:#ececec;left:1256px;">172.16.30.169,</div>
<div class="t" style="top:18px;font-size:14px;color:#e6e6e6;left:1344.5px;width:300px;text-align:center;font-weight:bold;">01:43 PM</div>
<div class="t" style="top:94px;font-size:14px;color:#e4e4e4;left:16px;">Time</div>
<div class="t" style="top:128px;font-size:18px;color:#62d6e4;left:63.3px;">UTC+9</div>
<div class="t" style="top:129px;font-size:18px;color:#62d6e4;left:210.4px;">Tue / March / 15 / 2025</div>
<div class="t" style="top:153px;font-size:82px;color:#62d6e4;left:58.18px;transform:scaleX(0.91);transform-origin:0 0;">0</div>
<div class="t" style="top:153px;font-size:82px;color:#62d6e4;left:102.53px;transform:scaleX(0.955);transform-origin:0 0;">9</div>
<div class="t" style="top:153px;font-size:82px;color:#62d6e4;left:152.99px;transform:scaleX(1.15);transform-origin:0 0;">:</div>
<div class="t" style="top:153px;font-size:82px;color:#62d6e4;left:185.41px;transform:scaleX(0.955);transform-origin:0 0;">4</div>
<div class="t" style="top:153px;font-size:82px;color:#62d6e4;left:231.32px;transform:scaleX(0.94);transform-origin:0 0;">5</div>
<div class="t" style="top:153px;font-size:82px;color:#62d6e4;left:281.59px;transform:scaleX(1.15);transform-origin:0 0;">:</div>
<div class="t" style="top:153px;font-size:82px;color:#62d6e4;left:315px;transform:scaleX(0.96);transform-origin:0 0;">3</div>
<div class="t" style="top:153px;font-size:82px;color:#62d6e4;left:361.08px;transform:scaleX(0.91);transform-origin:0 0;">0</div>
<div class="t" style="top:243px;font-size:16px;color:#62d6e4;left:64px;">Latitude = 37.495470  Longitude = 127.039984</div>
<div class="t" style="top:271px;font-size:16px;color:#62d6e4;left:63.3px;">SYNC</div>
<div class="t" style="top:272px;font-size:16px;color:#535353;left:12.6px;width:300px;text-align:center;">No signal</div>
<div class="t" style="top:272px;font-size:16px;color:#535353;left:106.8px;width:300px;text-align:center;">SOFT</div>
<div class="t" style="top:272px;font-size:16px;color:#2f3f42;left:202.5px;width:300px;text-align:center;">HARD</div>
<div class="t" style="top:94px;font-size:14px;color:#e4e4e4;left:484.5px;">LAN 0</div>
<div class="t" style="top:130px;font-size:16px;color:#dcdcdc;left:510px;">172.17.200.225   Subnet Mask 255.255.0.0</div>
<div class="t" style="top:170px;font-size:14px;color:#e4e4e4;left:484.5px;">LAN 1</div>
<div class="t" style="top:205px;font-size:16px;color:#dcdcdc;left:510px;">172.17.200.226   Subnet Mask 255.255.0.0</div>
<div class="t" style="top:245px;font-size:14px;color:#e4e4e4;left:485.5px;">NTP Server Network Status</div>
<div class="t" style="top:272px;font-size:14px;color:#dcdcdc;left:491px;">LAN 0</div>
<div class="t" style="top:274px;font-size:12px;color:#c8c8c8;left:543px;">RX:</div>
<div class="t" style="top:274px;font-size:12px;color:#5bc8d8;left:609.6px;">1,572,864</div>
<div class="t" style="top:273px;font-size:12px;color:#c8c8c8;left:669.5px;">bytes</div>
<div class="t" style="top:274px;font-size:12px;color:#c8c8c8;left:741.5px;">TX:</div>
<div class="t" style="top:274px;font-size:12px;color:#5bc8d8;left:806.5px;">1,572,864</div>
<div class="t" style="top:273px;font-size:12px;color:#c8c8c8;left:866.5px;">bytes</div>
<div class="t" style="top:289px;font-size:14px;color:#dcdcdc;left:491px;">LAN 1</div>
<div class="t" style="top:290px;font-size:12px;color:#c8c8c8;left:543px;">RX:</div>
<div class="t" style="top:291px;font-size:12px;color:#5bc8d8;left:609.6px;">1,572,864</div>
<div class="t" style="top:290px;font-size:12px;color:#c8c8c8;left:669.5px;">bytes</div>
<div class="t" style="top:290px;font-size:12px;color:#c8c8c8;left:741.5px;">TX:</div>
<div class="t" style="top:291px;font-size:12px;color:#5bc8d8;left:806.5px;">1,572,864</div>
<div class="t" style="top:290px;font-size:12px;color:#c8c8c8;left:866.5px;">bytes</div>
<div class="t" style="top:95px;font-size:14px;color:#e4e4e4;left:959.5px;">GPS  Spoofing</div>
<div class="t" style="top:120px;font-size:9px;color:#8e8e8e;left:984.4px;transform:scaleX(1.38);transform-origin:0 0;">ID</div>
<div class="t" style="top:148px;font-size:12px;color:#dcdcdc;left:845.2px;width:300px;text-align:center;">1</div>
<div class="t" style="top:148px;font-size:12px;color:#dcdcdc;left:1040px;">2025-07-04 14:20:25</div>
<div class="t" style="top:148px;font-size:12px;color:#dcdcdc;left:1304.2px;">Spoofing Detected</div>
<div class="t" style="top:181px;font-size:12px;color:#dcdcdc;left:845.2px;width:300px;text-align:center;">2</div>
<div class="t" style="top:181px;font-size:12px;color:#dcdcdc;left:1040px;">2025-07-04 14:20:25</div>
<div class="t" style="top:181px;font-size:12px;color:#dcdcdc;left:1304.2px;">Spoofing Detected</div>
<div class="t" style="top:215px;font-size:12px;color:#dcdcdc;left:845.2px;width:300px;text-align:center;">3</div>
<div class="t" style="top:215px;font-size:12px;color:#dcdcdc;left:1040px;">2025-07-04 14:20:25</div>
<div class="t" style="top:212px;font-size:12px;color:#dcdcdc;left:1304.2px;">Spoofing Detected</div>
<div class="t" style="top:242px;font-size:14px;color:#e4e4e4;left:959.5px;">GPS  Jamming</div>
<div class="t" style="top:264px;font-size:9px;color:#8e8e8e;left:984.4px;transform:scaleX(1.38);transform-origin:0 0;">ID</div>
<div class="t" style="top:292px;font-size:12px;color:#dcdcdc;left:845.2px;width:300px;text-align:center;">1</div>
<div class="t" style="top:294px;font-size:12px;color:#dcdcdc;left:1040px;">2025-07-04 14:20:25</div>
<div class="t" style="top:291px;font-size:12px;color:#dcdcdc;left:1304.2px;">Jamming Detected</div>
<div class="t" style="top:325px;font-size:12px;color:#dcdcdc;left:845.2px;width:300px;text-align:center;">2</div>
<div class="t" style="top:325px;font-size:12px;color:#dcdcdc;left:1040px;">2025-07-04 14:20:25</div>
<div class="t" style="top:324px;font-size:12px;color:#dcdcdc;left:1304.2px;">Jamming Detected</div>
<div class="t" style="top:359px;font-size:12px;color:#dcdcdc;left:845.2px;width:300px;text-align:center;">3</div>
<div class="t" style="top:359px;font-size:12px;color:#dcdcdc;left:1040px;">2025-07-04 14:20:25</div>
<div class="t" style="top:355px;font-size:12px;color:#dcdcdc;left:1304.2px;">Jamming Detected</div>
<div class="t" style="top:402px;font-size:14px;color:#dcdcdc;left:975px;">Jamming detection parameter</div>
<div class="t" style="top:391px;font-size:14px;color:#dcdcdc;left:1195px;">Broadband threshold</div>
<div class="t" style="top:415px;font-size:14px;color:#dcdcdc;left:1195px;">CW(Continuous Wave) threshold</div>
<div class="t" style="top:392px;font-size:14px;color:#d4d4d4;left:1312px;width:300px;text-align:center;">12</div>
<div class="t" style="top:414px;font-size:14px;color:#d4d4d4;left:1312px;width:300px;text-align:center;">24</div>
<div class="t" style="top:391px;font-size:14px;color:#dcdcdc;left:1504px;">dB (0-15)</div>
<div class="t" style="top:415px;font-size:14px;color:#dcdcdc;left:1504px;">dB (0-31)</div>
<div class="t" style="top:407px;font-size:10px;color:#fff;left:1627px;">Apply</div>
<div class="t" style="top:318px;font-size:14px;color:#e4e4e4;left:18.8px;">NTP Server Status</div>
<div class="t" style="top:346px;font-size:14px;color:#dcdcdc;left:-69.8px;width:300px;text-align:center;">CPU</div>
<div class="t" style="top:395px;font-size:19.5px;color:#636363;left:-67.9px;width:300px;text-align:center;">3%</div>
<div class="t" style="top:395px;font-size:19.5px;color:#636363;left:84.7px;width:300px;text-align:center;">16%</div>
<div class="t" style="top:395px;font-size:19.5px;color:#636363;left:237.3px;width:300px;text-align:center;">49%</div>
<div class="t" style="top:318px;font-size:14px;color:#e4e4e4;left:484.6px;">Speaker Volume</div>
<div class="t" style="top:374px;font-size:16.5px;color:#19a2c4;left:396.4px;width:300px;text-align:center;font-weight:bold;">0</div>
<div class="t" style="top:452px;font-size:14px;color:#e4e4e4;left:18.7px;">GPS Satellites Counts</div>
<div class="t" style="top:523px;font-size:21px;color:#56c41a;left:52.6px;width:300px;text-align:center;">8</div>
<div class="t" style="top:549px;font-size:10px;color:#e0e0e0;left:54.3px;width:300px;text-align:center;">Satellites</div>
<div class="t" style="top:450px;font-size:14px;color:#e4e4e4;left:432.7px;">SBAS Satellites Counts</div>
<div class="t" style="top:523px;font-size:21px;color:#c6e02c;left:483.6px;width:300px;text-align:center;">1</div>
<div class="t" style="top:549px;font-size:10px;color:#e0e0e0;left:485.2px;width:300px;text-align:center;">Satellites</div>
<div class="t" style="top:450px;font-size:14px;color:#e4e4e4;left:859.6px;">GLONASS Satellites Counts</div>
<div class="t" style="top:523px;font-size:21px;color:#c63cf0;left:901px;width:300px;text-align:center;">2</div>
<div class="t" style="top:549px;font-size:10px;color:#e0e0e0;left:901.2px;width:300px;text-align:center;">Satellites</div>
<div class="t" style="top:450px;font-size:14px;color:#e4e4e4;left:1271.7px;">QZSS Satellites Counts</div>
<div class="t" style="top:523px;font-size:21px;color:#2c86e2;left:1320.6px;width:300px;text-align:center;">1</div>
<div class="t" style="top:549px;font-size:10px;color:#e0e0e0;left:1322.4px;width:300px;text-align:center;">Satellites</div>
<div class="t" style="top:616px;font-size:14px;color:#e6e6e6;left:18.7px;">GPS Signal Level</div>
<div class="t" style="top:663px;font-size:8px;color:#aeaeae;right:1649.8px;transform:scaleX(0.8);transform-origin:100% 0;">36</div>
<div class="t" style="top:679px;font-size:8px;color:#aeaeae;right:1649.8px;transform:scaleX(0.8);transform-origin:100% 0;">32</div>
<div class="t" style="top:694px;font-size:8px;color:#aeaeae;right:1649.8px;transform:scaleX(0.8);transform-origin:100% 0;">28</div>
<div class="t" style="top:709px;font-size:8px;color:#aeaeae;right:1649.8px;transform:scaleX(0.8);transform-origin:100% 0;">24</div>
<div class="t" style="top:724px;font-size:8px;color:#aeaeae;right:1649.8px;transform:scaleX(0.8);transform-origin:100% 0;">20</div>
<div class="t" style="top:740px;font-size:8px;color:#aeaeae;right:1649.8px;transform:scaleX(0.8);transform-origin:100% 0;">16</div>
<div class="t" style="top:755px;font-size:8px;color:#aeaeae;right:1649.8px;transform:scaleX(0.8);transform-origin:100% 0;">12</div>
<div class="t" style="top:770px;font-size:8px;color:#aeaeae;right:1649.8px;transform:scaleX(0.8);transform-origin:100% 0;">8</div>
<div class="t" style="top:786px;font-size:8px;color:#aeaeae;right:1649.8px;transform:scaleX(0.8);transform-origin:100% 0;">4</div>
<div class="t" style="top:801px;font-size:8px;color:#aeaeae;right:1649.8px;transform:scaleX(0.8);transform-origin:100% 0;">0</div>
<div class="t" style="top:810px;font-size:8px;color:#aeaeae;left:-115.1px;width:300px;text-align:center;transform:scaleX(0.8);transform-origin:50% 0;">17:08:02</div>
<div class="t" style="top:810px;font-size:8px;color:#aeaeae;left:-80.76px;width:300px;text-align:center;transform:scaleX(0.8);transform-origin:50% 0;">17:08:07</div>
<div class="t" style="top:810px;font-size:8px;color:#aeaeae;left:-46.42px;width:300px;text-align:center;transform:scaleX(0.8);transform-origin:50% 0;">17:08:12</div>
<div class="t" style="top:810px;font-size:8px;color:#aeaeae;left:-12.08px;width:300px;text-align:center;transform:scaleX(0.8);transform-origin:50% 0;">17:08:17</div>
<div class="t" style="top:810px;font-size:8px;color:#aeaeae;left:22.26px;width:300px;text-align:center;transform:scaleX(0.8);transform-origin:50% 0;">17:08:22</div>
<div class="t" style="top:810px;font-size:8px;color:#aeaeae;left:56.6px;width:300px;text-align:center;transform:scaleX(0.8);transform-origin:50% 0;">17:08:27</div>
<div class="t" style="top:810px;font-size:8px;color:#aeaeae;left:90.94px;width:300px;text-align:center;transform:scaleX(0.8);transform-origin:50% 0;">17:08:32</div>
<div class="t" style="top:810px;font-size:8px;color:#aeaeae;left:125.28px;width:300px;text-align:center;transform:scaleX(0.8);transform-origin:50% 0;">17:08:37</div>
<div class="t" style="top:810px;font-size:8px;color:#aeaeae;left:159.62px;width:300px;text-align:center;transform:scaleX(0.8);transform-origin:50% 0;">17:08:42</div>
<div class="t" style="top:810px;font-size:8px;color:#aeaeae;left:193.96px;width:300px;text-align:center;transform:scaleX(0.8);transform-origin:50% 0;">17:08:47</div>
<div class="t" style="top:810px;font-size:8px;color:#aeaeae;left:228.3px;width:300px;text-align:center;transform:scaleX(0.8);transform-origin:50% 0;">17:08:52</div>
<div class="t" style="top:614px;font-size:14px;color:#e6e6e6;left:442.8px;">SBAS Signal Level</div>
<div class="t" style="top:663px;font-size:8px;color:#aeaeae;right:1228.9px;transform:scaleX(0.8);transform-origin:100% 0;">36</div>
<div class="t" style="top:679px;font-size:8px;color:#aeaeae;right:1228.9px;transform:scaleX(0.8);transform-origin:100% 0;">32</div>
<div class="t" style="top:694px;font-size:8px;color:#aeaeae;right:1228.9px;transform:scaleX(0.8);transform-origin:100% 0;">28</div>
<div class="t" style="top:709px;font-size:8px;color:#aeaeae;right:1228.9px;transform:scaleX(0.8);transform-origin:100% 0;">24</div>
<div class="t" style="top:724px;font-size:8px;color:#aeaeae;right:1228.9px;transform:scaleX(0.8);transform-origin:100% 0;">20</div>
<div class="t" style="top:740px;font-size:8px;color:#aeaeae;right:1228.9px;transform:scaleX(0.8);transform-origin:100% 0;">16</div>
<div class="t" style="top:755px;font-size:8px;color:#aeaeae;right:1228.9px;transform:scaleX(0.8);transform-origin:100% 0;">12</div>
<div class="t" style="top:770px;font-size:8px;color:#aeaeae;right:1228.9px;transform:scaleX(0.8);transform-origin:100% 0;">8</div>
<div class="t" style="top:786px;font-size:8px;color:#aeaeae;right:1228.9px;transform:scaleX(0.8);transform-origin:100% 0;">4</div>
<div class="t" style="top:801px;font-size:8px;color:#aeaeae;right:1228.9px;transform:scaleX(0.8);transform-origin:100% 0;">0</div>
<div class="t" style="top:810px;font-size:8px;color:#aeaeae;left:305.8px;width:300px;text-align:center;transform:scaleX(0.8);transform-origin:50% 0;">17:08:02</div>
<div class="t" style="top:810px;font-size:8px;color:#aeaeae;left:340.16px;width:300px;text-align:center;transform:scaleX(0.8);transform-origin:50% 0;">17:08:07</div>
<div class="t" style="top:810px;font-size:8px;color:#aeaeae;left:374.52px;width:300px;text-align:center;transform:scaleX(0.8);transform-origin:50% 0;">17:08:12</div>
<div class="t" style="top:810px;font-size:8px;color:#aeaeae;left:408.88px;width:300px;text-align:center;transform:scaleX(0.8);transform-origin:50% 0;">17:08:17</div>
<div class="t" style="top:810px;font-size:8px;color:#aeaeae;left:443.24px;width:300px;text-align:center;transform:scaleX(0.8);transform-origin:50% 0;">17:08:22</div>
<div class="t" style="top:810px;font-size:8px;color:#aeaeae;left:477.6px;width:300px;text-align:center;transform:scaleX(0.8);transform-origin:50% 0;">17:08:27</div>
<div class="t" style="top:810px;font-size:8px;color:#aeaeae;left:511.96px;width:300px;text-align:center;transform:scaleX(0.8);transform-origin:50% 0;">17:08:32</div>
<div class="t" style="top:810px;font-size:8px;color:#aeaeae;left:546.32px;width:300px;text-align:center;transform:scaleX(0.8);transform-origin:50% 0;">17:08:37</div>
<div class="t" style="top:810px;font-size:8px;color:#aeaeae;left:580.68px;width:300px;text-align:center;transform:scaleX(0.8);transform-origin:50% 0;">17:08:42</div>
<div class="t" style="top:810px;font-size:8px;color:#aeaeae;left:615.04px;width:300px;text-align:center;transform:scaleX(0.8);transform-origin:50% 0;">17:08:47</div>
<div class="t" style="top:810px;font-size:8px;color:#aeaeae;left:649.4px;width:300px;text-align:center;transform:scaleX(0.8);transform-origin:50% 0;">17:08:52</div>
<div class="t" style="top:614px;font-size:14px;color:#e6e6e6;left:860.7px;">GLONASS Signal Level</div>
<div class="t" style="top:663px;font-size:8px;color:#aeaeae;right:809.7px;transform:scaleX(0.8);transform-origin:100% 0;">36</div>
<div class="t" style="top:679px;font-size:8px;color:#aeaeae;right:809.7px;transform:scaleX(0.8);transform-origin:100% 0;">32</div>
<div class="t" style="top:694px;font-size:8px;color:#aeaeae;right:809.7px;transform:scaleX(0.8);transform-origin:100% 0;">28</div>
<div class="t" style="top:709px;font-size:8px;color:#aeaeae;right:809.7px;transform:scaleX(0.8);transform-origin:100% 0;">24</div>
<div class="t" style="top:724px;font-size:8px;color:#aeaeae;right:809.7px;transform:scaleX(0.8);transform-origin:100% 0;">20</div>
<div class="t" style="top:740px;font-size:8px;color:#aeaeae;right:809.7px;transform:scaleX(0.8);transform-origin:100% 0;">16</div>
<div class="t" style="top:755px;font-size:8px;color:#aeaeae;right:809.7px;transform:scaleX(0.8);transform-origin:100% 0;">12</div>
<div class="t" style="top:770px;font-size:8px;color:#aeaeae;right:809.7px;transform:scaleX(0.8);transform-origin:100% 0;">8</div>
<div class="t" style="top:786px;font-size:8px;color:#aeaeae;right:809.7px;transform:scaleX(0.8);transform-origin:100% 0;">4</div>
<div class="t" style="top:801px;font-size:8px;color:#aeaeae;right:809.7px;transform:scaleX(0.8);transform-origin:100% 0;">0</div>
<div class="t" style="top:810px;font-size:8px;color:#aeaeae;left:725px;width:300px;text-align:center;transform:scaleX(0.8);transform-origin:50% 0;">17:08:02</div>
<div class="t" style="top:810px;font-size:8px;color:#aeaeae;left:759.31px;width:300px;text-align:center;transform:scaleX(0.8);transform-origin:50% 0;">17:08:07</div>
<div class="t" style="top:810px;font-size:8px;color:#aeaeae;left:793.62px;width:300px;text-align:center;transform:scaleX(0.8);transform-origin:50% 0;">17:08:12</div>
<div class="t" style="top:810px;font-size:8px;color:#aeaeae;left:827.93px;width:300px;text-align:center;transform:scaleX(0.8);transform-origin:50% 0;">17:08:17</div>
<div class="t" style="top:810px;font-size:8px;color:#aeaeae;left:862.24px;width:300px;text-align:center;transform:scaleX(0.8);transform-origin:50% 0;">17:08:22</div>
<div class="t" style="top:810px;font-size:8px;color:#aeaeae;left:896.55px;width:300px;text-align:center;transform:scaleX(0.8);transform-origin:50% 0;">17:08:27</div>
<div class="t" style="top:810px;font-size:8px;color:#aeaeae;left:930.86px;width:300px;text-align:center;transform:scaleX(0.8);transform-origin:50% 0;">17:08:32</div>
<div class="t" style="top:810px;font-size:8px;color:#aeaeae;left:965.17px;width:300px;text-align:center;transform:scaleX(0.8);transform-origin:50% 0;">17:08:37</div>
<div class="t" style="top:810px;font-size:8px;color:#aeaeae;left:999.48px;width:300px;text-align:center;transform:scaleX(0.8);transform-origin:50% 0;">17:08:42</div>
<div class="t" style="top:810px;font-size:8px;color:#aeaeae;left:1033.79px;width:300px;text-align:center;transform:scaleX(0.8);transform-origin:50% 0;">17:08:47</div>
<div class="t" style="top:810px;font-size:8px;color:#aeaeae;left:1068.1px;width:300px;text-align:center;transform:scaleX(0.8);transform-origin:50% 0;">17:08:52</div>
<div class="t" style="top:614px;font-size:14px;color:#e6e6e6;left:1270.9px;">QZSS Signal Level</div>
<div class="t" style="top:663px;font-size:8px;color:#aeaeae;right:393.6px;transform:scaleX(0.8);transform-origin:100% 0;">36</div>
<div class="t" style="top:679px;font-size:8px;color:#aeaeae;right:393.6px;transform:scaleX(0.8);transform-origin:100% 0;">32</div>
<div class="t" style="top:694px;font-size:8px;color:#aeaeae;right:393.6px;transform:scaleX(0.8);transform-origin:100% 0;">28</div>
<div class="t" style="top:709px;font-size:8px;color:#aeaeae;right:393.6px;transform:scaleX(0.8);transform-origin:100% 0;">24</div>
<div class="t" style="top:724px;font-size:8px;color:#aeaeae;right:393.6px;transform:scaleX(0.8);transform-origin:100% 0;">20</div>
<div class="t" style="top:740px;font-size:8px;color:#aeaeae;right:393.6px;transform:scaleX(0.8);transform-origin:100% 0;">16</div>
<div class="t" style="top:755px;font-size:8px;color:#aeaeae;right:393.6px;transform:scaleX(0.8);transform-origin:100% 0;">12</div>
<div class="t" style="top:770px;font-size:8px;color:#aeaeae;right:393.6px;transform:scaleX(0.8);transform-origin:100% 0;">8</div>
<div class="t" style="top:786px;font-size:8px;color:#aeaeae;right:393.6px;transform:scaleX(0.8);transform-origin:100% 0;">4</div>
<div class="t" style="top:801px;font-size:8px;color:#aeaeae;right:393.6px;transform:scaleX(0.8);transform-origin:100% 0;">0</div>
<div class="t" style="top:810px;font-size:8px;color:#aeaeae;left:1141.1px;width:300px;text-align:center;transform:scaleX(0.8);transform-origin:50% 0;">17:08:02</div>
<div class="t" style="top:810px;font-size:8px;color:#aeaeae;left:1175.41px;width:300px;text-align:center;transform:scaleX(0.8);transform-origin:50% 0;">17:08:07</div>
<div class="t" style="top:810px;font-size:8px;color:#aeaeae;left:1209.72px;width:300px;text-align:center;transform:scaleX(0.8);transform-origin:50% 0;">17:08:12</div>
<div class="t" style="top:810px;font-size:8px;color:#aeaeae;left:1244.03px;width:300px;text-align:center;transform:scaleX(0.8);transform-origin:50% 0;">17:08:17</div>
<div class="t" style="top:810px;font-size:8px;color:#aeaeae;left:1278.34px;width:300px;text-align:center;transform:scaleX(0.8);transform-origin:50% 0;">17:08:22</div>
<div class="t" style="top:810px;font-size:8px;color:#aeaeae;left:1312.65px;width:300px;text-align:center;transform:scaleX(0.8);transform-origin:50% 0;">17:08:27</div>
<div class="t" style="top:810px;font-size:8px;color:#aeaeae;left:1346.96px;width:300px;text-align:center;transform:scaleX(0.8);transform-origin:50% 0;">17:08:32</div>
<div class="t" style="top:810px;font-size:8px;color:#aeaeae;left:1381.27px;width:300px;text-align:center;transform:scaleX(0.8);transform-origin:50% 0;">17:08:37</div>
<div class="t" style="top:810px;font-size:8px;color:#aeaeae;left:1415.58px;width:300px;text-align:center;transform:scaleX(0.8);transform-origin:50% 0;">17:08:42</div>
<div class="t" style="top:810px;font-size:8px;color:#aeaeae;left:1449.89px;width:300px;text-align:center;transform:scaleX(0.8);transform-origin:50% 0;">17:08:47</div>
<div class="t" style="top:810px;font-size:8px;color:#aeaeae;left:1484.2px;width:300px;text-align:center;transform:scaleX(0.8);transform-origin:50% 0;">17:08:52</div>
<div class="t" style="top:847px;font-size:14px;color:#fff;left:42.6px;font-weight:bold;">(60)</div>
<div class="t" style="top:871px;font-size:14px;color:#8e8e8e;left:40.2px;">ID</div>
<div class="t" style="top:913px;font-size:14px;color:#dcdcdc;left:35.8px;letter-spacing:-0.2px;">292...</div>
<div class="t" style="top:913px;font-size:14px;color:#dcdcdc;left:85.6px;letter-spacing:-0.55px;">2017-11-29</div>
<div class="t" style="top:928px;font-size:14px;color:#dcdcdc;left:86.3px;letter-spacing:-0.55px;">17:52:22</div>
<div class="t" style="top:913px;font-size:15px;color:#dcdcdc;left:351.2px;">A</div>
<div class="t" style="top:913px;font-size:15px;color:#dcdcdc;left:439.2px;">AP-GTR3000GD</div>
<div class="t" style="top:911px;font-size:15px;color:#dcdcdc;left:623px;">Spoofing Detection</div>
<div class="t" style="top:964px;font-size:14px;color:#dcdcdc;left:35.8px;letter-spacing:-0.2px;">292...</div>
<div class="t" style="top:964px;font-size:14px;color:#dcdcdc;left:85.6px;letter-spacing:-0.55px;">2017-11-29</div>
<div class="t" style="top:979px;font-size:14px;color:#dcdcdc;left:86.3px;letter-spacing:-0.55px;">17:52:22</div>
<div class="t" style="top:964px;font-size:15px;color:#dcdcdc;left:351.2px;">A</div>
<div class="t" style="top:963px;font-size:15px;color:#dcdcdc;left:439.2px;">AP-GTR3000GD</div>
<div class="t" style="top:962px;font-size:15px;color:#dcdcdc;left:621.2px;transform:scaleX(0.91);transform-origin:0 0;">GPS</div>
<div class="t" style="top:1015px;font-size:14px;color:#dcdcdc;left:35.8px;letter-spacing:-0.2px;">292...</div>
<div class="t" style="top:1015px;font-size:14px;color:#dcdcdc;left:85.6px;letter-spacing:-0.55px;">2017-11-29</div>
<div class="t" style="top:1030px;font-size:14px;color:#dcdcdc;left:86.3px;letter-spacing:-0.55px;">17:52:22</div>
<div class="t" style="top:1015px;font-size:15px;color:#dcdcdc;left:351.2px;">A</div>
<div class="t" style="top:1014px;font-size:15px;color:#dcdcdc;left:439.2px;">AP-GTR3000GD</div>
<div class="t" style="top:1013px;font-size:15px;color:#dcdcdc;left:621px;">Jamming Detection</div>
<div class="t" style="top:845px;font-size:14px;color:#e4e4e4;left:856px;">NTP client</div>
<div class="t" style="top:881px;font-size:14px;color:#dcdcdc;left:856.3px;">lstint avgint rstr r m v  count rport remote address</div>
<div class="t" style="top:909px;font-size:14px;color:#dcdcdc;left:856.4px;">===========================================================================</div>
<div class="t" style="top:937px;font-size:14px;color:#dcdcdc;left:876px;">2</div>
<div class="t" style="top:937px;font-size:14px;color:#dcdcdc;left:903.3px;">65</div>
<div class="t" style="top:937px;font-size:14px;color:#dcdcdc;left:938.3px;">390</div>
<div class="t" style="top:937px;font-size:14px;color:#dcdcdc;left:969.5px;">.</div>
<div class="t" style="top:937px;font-size:14px;color:#dcdcdc;left:977.3px;">3</div>
<div class="t" style="top:937px;font-size:14px;color:#dcdcdc;left:988.8px;">4</div>
<div class="t" style="top:937px;font-size:14px;color:#dcdcdc;left:1008.3px;">47776</div>
<div class="t" style="top:937px;font-size:14px;color:#dcdcdc;left:1055.3px;">59110</div>
<div class="t" style="top:937px;font-size:14px;color:#dcdcdc;left:1101.6px;">172.17.207.254</div>
<div class="t" style="top:951px;font-size:14px;color:#dcdcdc;left:872px;">48</div>
<div class="t" style="top:951px;font-size:14px;color:#dcdcdc;left:907px;">65</div>
<div class="t" style="top:951px;font-size:14px;color:#dcdcdc;left:938.3px;">390</div>
<div class="t" style="top:951px;font-size:14px;color:#dcdcdc;left:969.5px;">.</div>
<div class="t" style="top:951px;font-size:14px;color:#dcdcdc;left:977.3px;">3</div>
<div class="t" style="top:951px;font-size:14px;color:#dcdcdc;left:988.8px;">4</div>
<div class="t" style="top:951px;font-size:14px;color:#dcdcdc;left:1008.3px;">47729</div>
<div class="t" style="top:951px;font-size:14px;color:#dcdcdc;left:1054.8px;">41132</div>
<div class="t" style="top:951px;font-size:14px;color:#dcdcdc;left:1101.6px;">172.17.207.253</div>
<div class="t" style="top:965px;font-size:14px;color:#dcdcdc;left:868px;">484</div>
<div class="t" style="top:965px;font-size:14px;color:#dcdcdc;left:903.8px;">1018</div>
<div class="t" style="top:965px;font-size:14px;color:#dcdcdc;left:938.3px;">390</div>
<div class="t" style="top:965px;font-size:14px;color:#dcdcdc;left:966.4px;">.</div>
<div class="t" style="top:965px;font-size:14px;color:#dcdcdc;left:977.3px;">3</div>
<div class="t" style="top:965px;font-size:14px;color:#dcdcdc;left:988.8px;">4</div>
<div class="t" style="top:965px;font-size:14px;color:#dcdcdc;left:1008.3px;">3034</div>
<div class="t" style="top:965px;font-size:14px;color:#dcdcdc;left:1055.3px;">55676</div>
<div class="t" style="top:965px;font-size:14px;color:#dcdcdc;left:1102.6px;">172.16.30.169</div>
</body></html>
